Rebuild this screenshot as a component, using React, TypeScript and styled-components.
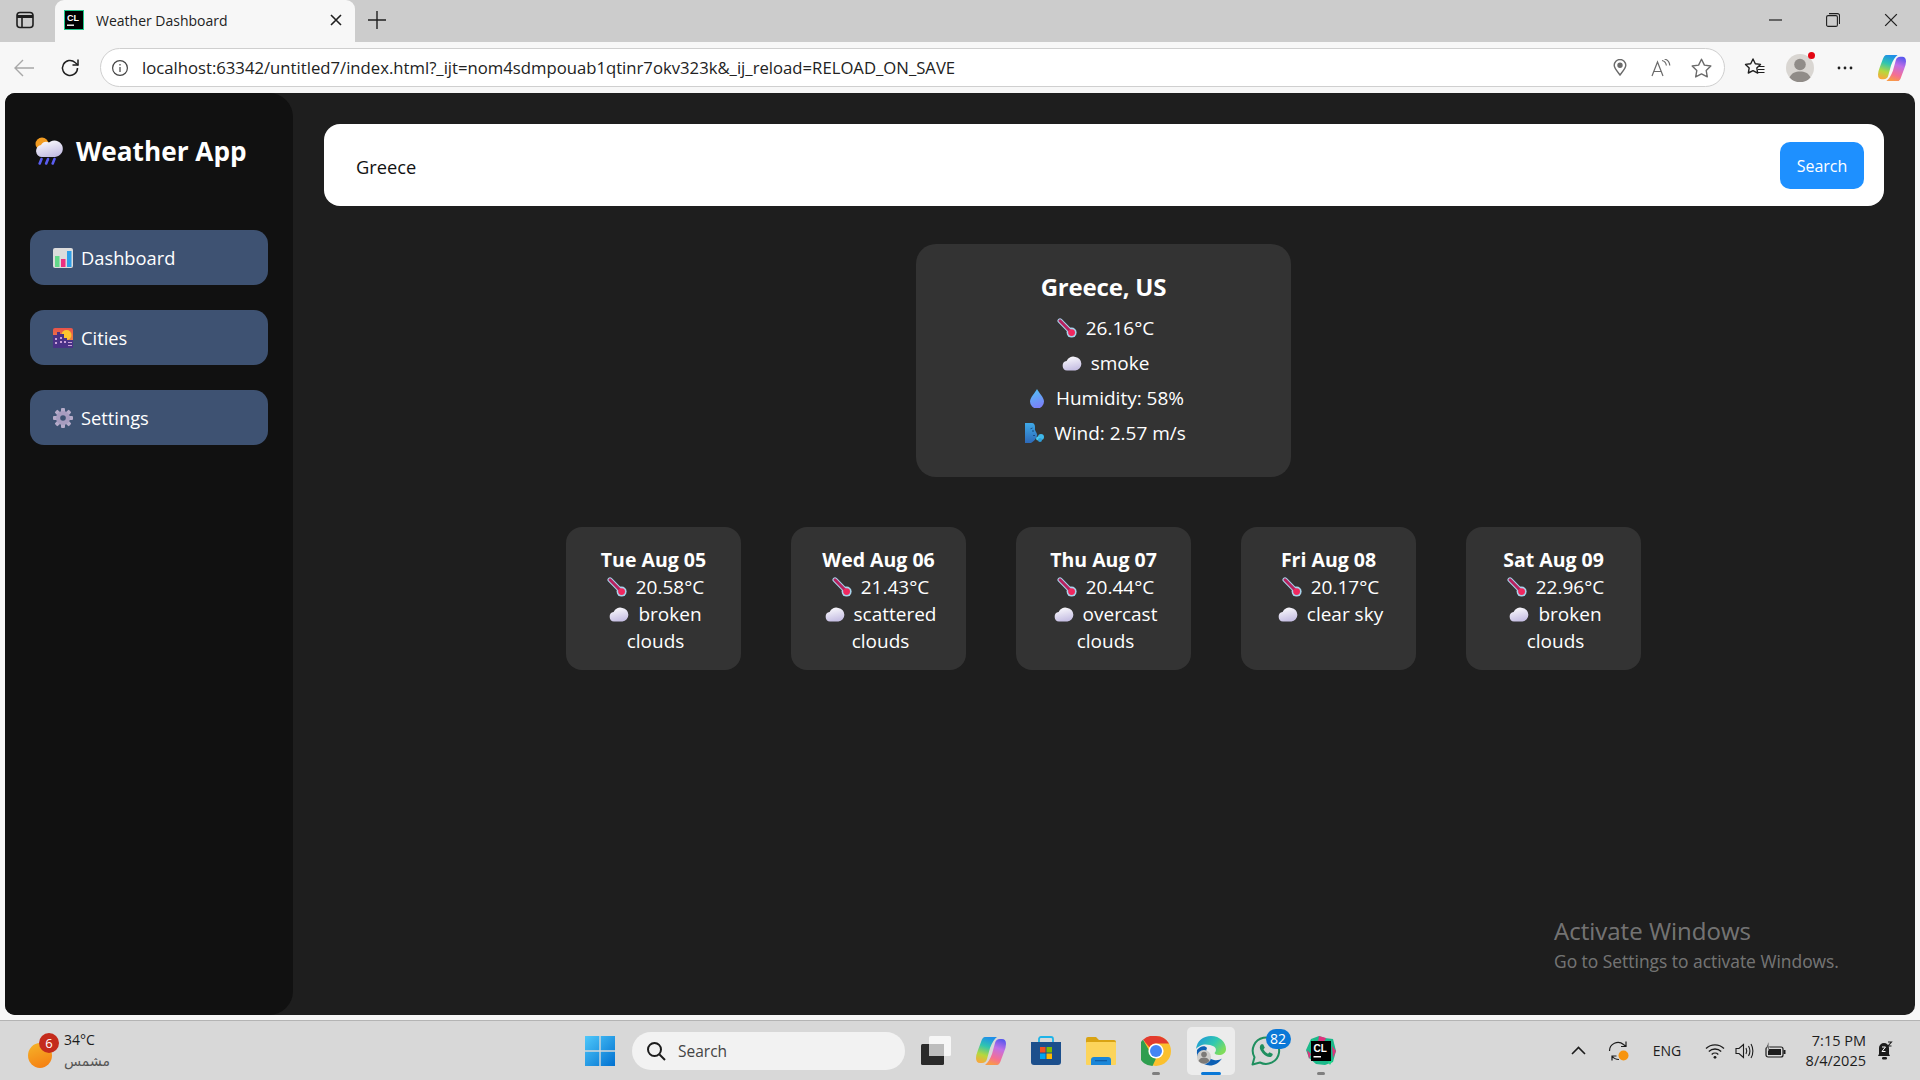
import React from "react";
import styled, { createGlobalStyle } from "styled-components";

const Global = createGlobalStyle`
  html, body { margin: 0; padding: 0; background: #f7f7f7; overflow: hidden; }
  * { box-sizing: border-box; }
  #root { font-family: "Open Sans", "Noto Sans", "DejaVu Sans", sans-serif; }
  svg { display: block; }
`;

const Screen = styled.div`
  width: 1920px;
  height: 1080px;
  display: flex;
  flex-direction: column;
  position: relative;
  background: #f7f7f7;
`;

/* ---------- browser chrome ---------- */
const TabStrip = styled.div`
  height: 42px;
  background: #cccccc;
  display: flex;
  align-items: stretch;
  color: #1a1a1a;
`;
const SideToggle = styled.div`
  width: 55px;
  display: flex;
  align-items: center;
  justify-content: center;
  padding: 0 6px 2px 0;
`;
const Tab = styled.div`
  width: 300px;
  background: #f7f7f7;
  border-radius: 9px 9px 0 0;
  display: flex;
  align-items: center;
  padding: 0 13px 2px 9px;
`;
const TabTitle = styled.span`
  font-size: 14px;
  margin-left: 12px;
  flex: 1;
  color: #222;
  white-space: nowrap;
  font-family: "Open Sans", sans-serif;
`;
const NewTab = styled.div`
  width: 44px;
  display: flex;
  align-items: center;
  justify-content: center;
  padding-bottom: 2px;
`;
const WindowControls = styled.div`
  margin-left: auto;
  display: flex;
`;
const WindowButton = styled.div`
  width: 58px;
  display: flex;
  align-items: center;
  justify-content: center;
  padding-bottom: 2px;
`;
const Toolbar = styled.div`
  height: 51px;
  background: #f7f7f7;
  display: flex;
  align-items: center;
`;
const NavGlyph = styled.div<{ $w?: number }>`
  width: ${(p) => p.$w ?? 45}px;
  height: 40px;
  display: flex;
  align-items: center;
  justify-content: center;
  position: relative;
`;
const AddressBar = styled.div`
  width: 1625px;
  height: 39px;
  margin-left: 8px;
  background: #fff;
  border: 1.5px solid #cfcfcf;
  border-radius: 20px;
  display: flex;
  align-items: center;
  padding: 0 2px 0 10px;
`;
const Url = styled.span`
  font-size: 16.7px;
  margin-left: 13px;
  color: #222;
  flex: 1;
  white-space: nowrap;
`;
const ToolbarEnd = styled.div`
  display: flex;
  margin-left: 7px;
`;
const Dot = styled.span`
  position: absolute;
  top: 4px;
  right: 7px;
  width: 7px;
  height: 7px;
  border-radius: 50%;
  background: #e30613;
`;

/* ---------- page ---------- */
const Page = styled.div`
  height: 922px;
  margin: 0 5px 5px;
  border-radius: 10px;
  background: #1e1e1e;
  display: flex;
  overflow: hidden;
  color: #fff;
`;
const Sidebar = styled.aside`
  width: 288px;
  background: #111111;
  border-radius: 0 24px 24px 0;
  padding: 0 25px;
  flex-shrink: 0;
`;
const Brand = styled.h1`
  margin: 0;
  height: 137px;
  padding: 41px 0 0 5px;
  display: flex;
  align-items: flex-start;
  gap: 13px;
  font-size: 26.2px;
  line-height: 34px;
  font-weight: 700;
`;
const Menu = styled.nav`
  display: flex;
  flex-direction: column;
  gap: 25px;
`;
const MenuItem = styled.div`
  height: 55px;
  background: #3e5272;
  border-radius: 14px;
  display: flex;
  align-items: center;
  padding-left: 23px;
  gap: 8px;
  font-size: 18.3px;
`;
const Main = styled.main`
  flex: 1;
  padding: 31px 31px 0;
  display: flex;
  flex-direction: column;
  align-items: center;
`;
const SearchBox = styled.div`
  width: 100%;
  height: 82px;
  background: #fff;
  border-radius: 16px;
  display: flex;
  align-items: center;
  padding: 0 20px 0 31px;
`;
const SearchInput = styled.input`
  flex: 1;
  border: 0;
  outline: 0;
  padding: 3px 1px 0;
  font-family: inherit;
  font-size: 18.3px;
  color: #111;
  background: transparent;
`;
const SearchButton = styled.button`
  width: 84px;
  height: 47px;
  border: 0;
  border-radius: 10px;
  padding-top: 2px;
  background: #1e90ff;
  color: #fff;
  font-family: inherit;
  font-size: 16px;
`;
const CurrentCard = styled.section`
  width: 375px;
  height: 233px;
  margin: 38px 1px 0 0;
  background: #333333;
  border-radius: 20px;
  padding: 26px 20px 0;
  text-align: center;
`;
const CurrentTitle = styled.h2`
  margin: 0 0 11.5px;
  font-size: 24px;
  line-height: 33px;
  font-weight: 700;
  letter-spacing: -0.2px;
`;
const CurrentRow = styled.div`
  font-size: 19px;
  line-height: 27px;
  margin-bottom: 8px;
  padding-left: 4px;
`;
const ForecastRow = styled.div`
  margin: 50px 1px 0 0;
  display: flex;
  gap: 50px;
`;
const ForecastCard = styled.article`
  width: 175px;
  height: 143px;
  background: #333333;
  border-radius: 16px;
  padding: 19px 18px 0;
  text-align: center;
  font-size: 19px;
  line-height: 27px;
`;
const ForecastDate = styled.div`
  font-weight: 700;
  font-size: 19.5px;
  margin-bottom: 1px;
`;
const ForecastLine = styled.div`
  padding-left: 4px;
`;
const EmojiBox = styled.span`
  display: inline-block;
  width: 20px;
  height: 20px;
  margin-right: 9px;
  vertical-align: -3px;
`;
const MenuEmoji = styled.span`
  width: 20px;
  height: 20px;
  flex-shrink: 0;
`;
const BrandEmoji = styled.span`
  width: 28px;
  height: 28px;
  margin-top: 3px;
  flex-shrink: 0;
`;
const Watermark = styled.div`
  position: absolute;
  left: 1554px;
  top: 915px;
  color: rgba(255, 255, 255, 0.4);
`;
const WatermarkTitle = styled.div`
  font-size: 24px;
  line-height: 32px;
`;
const WatermarkText = styled.div`
  font-size: 17.4px;
  line-height: 28px;
`;

/* ---------- taskbar ---------- */
const Taskbar = styled.footer`
  height: 60px;
  background: #d8d8d8;
  border-top: 1.5px solid #b4b4b4;
  display: flex;
  align-items: center;
  color: #1c1c1c;
`;
const WeatherWidget = styled.div`
  width: 570px;
  height: 100%;
  padding-left: 28px;
  display: flex;
  align-items: center;
  gap: 12px;
`;
const SunBadge = styled.div`
  width: 24px;
  height: 25px;
  margin-top: 9px;
  position: relative;
  border-radius: 50%;
  background: linear-gradient(160deg, #f5b52a, #f57a10);
`;
const Badge = styled.span<{ $bg: string; $w: number }>`
  position: absolute;
  display: flex;
  align-items: center;
  justify-content: center;
  background: ${(p) => p.$bg};
  color: #fff;
  border-radius: 10px;
  width: ${(p) => p.$w}px;
  height: 20px;
  font-size: 13px;
`;
const SunCount = styled(Badge)`
  top: -10px;
  right: -7px;
`;
const WeatherText = styled.div`
  display: flex;
  flex-direction: column;
`;
const WeatherTemp = styled.span`
  font-size: 14px;
  line-height: 20px;
`;
const WeatherNote = styled.span`
  font-size: 14px;
  line-height: 22px;
  color: #555;
  font-family: "DejaVu Sans", sans-serif;
`;
const StartSlot = styled.div`
  width: 60px;
  display: flex;
  justify-content: center;
`;
const TaskSearch = styled.div`
  width: 273px;
  height: 38px;
  margin: 0 3.5px 0 2px;
  background: #f2f2f2;
  border-radius: 19px;
  display: flex;
  align-items: center;
  padding-left: 14px;
  gap: 12px;
  font-size: 15.5px;
  color: #444;
`;
const TaskIcon = styled.div`
  width: 55px;
  height: 48px;
  display: flex;
  align-items: center;
  justify-content: center;
  position: relative;
`;
const ActiveTile = styled.div`
  position: absolute;
  left: 3.5px;
  top: 0;
  width: 48px;
  height: 48px;
  border-radius: 5px;
  background: #ececec;
`;
const RunMark = styled.span<{ $active?: boolean }>`
  position: absolute;
  bottom: 0;
  left: 50%;
  transform: translateX(-50%);
  height: 3px;
  border-radius: 2px;
  width: ${(p) => (p.$active ? 20 : 8)}px;
  background: ${(p) => (p.$active ? "#0a78d7" : "#7f7f7f")};
`;
const IconLayer = styled.div`
  position: relative;
`;
const ChatCount = styled(Badge)`
  top: 2px;
  right: 3px;
  font-size: 14px;
`;
const Tray = styled.div`
  margin-left: auto;
  display: flex;
  align-items: center;
  padding-right: 27px;
`;
const TrayGlyph = styled.div<{ $w: number }>`
  width: ${(p) => p.$w}px;
  display: flex;
  justify-content: center;
  position: relative;
`;
const Lang = styled.span`
  font-size: 14px;
  width: 50px;
  margin-right: 8px;
  text-align: center;
`;
const Clock = styled.div`
  width: 76px;
  text-align: right;
  white-space: nowrap;
  font-size: 14.5px;
  line-height: 20px;
`;
const Bell = styled.div`
  margin-left: 10px;
`;

/* ---------- drawings ---------- */
const Thermo = () => (
  <svg viewBox="0 0 20 20" width="20" height="20">
    <line x1="3" y1="2.8" x2="13" y2="13" stroke="#a8d4ec" strokeWidth="5" strokeLinecap="round" />
    <circle cx="14.6" cy="14.6" r="5" fill="#a8d4ec" />
    <line x1="3" y1="2.8" x2="13" y2="13" stroke="#b6225f" strokeWidth="3" strokeLinecap="round" />
    <circle cx="14.6" cy="14.6" r="3.4" fill="#f0285f" />
  </svg>
);
const Cloud = () => (
  <svg viewBox="0 0 20 20" width="20" height="20">
    <defs>
      <linearGradient id="cl" x1="0" y1="0" x2="0.3" y2="1">
        <stop offset="0" stopColor="#ffffff" />
        <stop offset="1" stopColor="#c8c1e4" />
      </linearGradient>
    </defs>
    <path d="M5 17.5a4.8 4.8 0 0 1-.4-9.5A7 7 0 0 1 13.4 4a6.8 6.8 0 0 1 0 13.5z" fill="url(#cl)" />
  </svg>
);
const Drop = () => (
  <svg viewBox="0 0 20 20" width="20" height="20">
    <defs>
      <linearGradient id="dr" x1="0" y1="0" x2="0.3" y2="1">
        <stop offset="0" stopColor="#4fc6f5" />
        <stop offset="1" stopColor="#7a82f8" />
      </linearGradient>
    </defs>
    <path d="M10 1C8 5 3 9.5 3 13.6a7 7 0 0 0 14 0C17 9.5 12 5 10 1z" fill="url(#dr)" />
  </svg>
);
const WindFace = () => (
  <svg viewBox="0 0 20 20" width="20" height="20">
    <defs>
      <linearGradient id="wf" x1="0" y1="0" x2="0" y2="1">
        <stop offset="0" stopColor="#3fa9e8" />
        <stop offset="1" stopColor="#2d69b8" />
      </linearGradient>
    </defs>
    <path d="M0 0h7c2 0 3 2 3 4v3c1 2 3 5 2 6-1 3-3 5-6 7H0z" fill="url(#wf)" />
    <circle cx="8" cy="8" r="0.8" fill="#123f73" />
    <path d="M5.5 5.8l2-.8M8 12.5h2" stroke="#123f73" strokeWidth="0.8" />
    <circle cx="16" cy="14" r="3" fill="#3fb8ea" />
    <circle cx="13" cy="15.5" r="2" fill="#48c6ef" />
    <circle cx="15" cy="17" r="2" fill="#2f9fdb" />
  </svg>
);
const BrandIcon = () => (
  <svg viewBox="0 0 28 28" width="28" height="28">
    <defs>
      <linearGradient id="bc" x1="0.1" y1="0" x2="0.5" y2="1">
        <stop offset="0" stopColor="#ffffff" />
        <stop offset="1" stopColor="#c5bfe4" />
      </linearGradient>
    </defs>
    <circle cx="7" cy="7" r="6.500" fill="#f29c22" />
    <path d="M7 20a6 6 0 0 1-1-11.900 6.500 6.500 0 0 1 8-2.600A8.300 8.300 0 1 1 20 20z" fill="url(#bc)" />
    <path d="M6.500 22l-1.800 4.500M13 22l-1.800 4.500M19.500 22l-1.800 4.500" stroke="#5a5df0" strokeWidth="2.600" strokeLinecap="round" />
  </svg>
);
const ChartIcon = () => (
  <svg viewBox="0 0 20 20" width="20" height="20">
    <rect x="0" y="0" width="20" height="20" rx="2" fill="#dcdcdc" />
    <rect x="2" y="8" width="4.5" height="11" fill="#63d88a" />
    <rect x="8" y="11" width="4.5" height="8" fill="#ee2f80" />
    <rect x="14" y="3" width="4.5" height="16" fill="#2f9fe8" />
  </svg>
);
const CityIcon = () => (
  <svg viewBox="0 0 20 20" width="20" height="20">
    <defs>
      <linearGradient id="sk" x1="0" y1="0" x2="0" y2="1">
        <stop offset="0" stopColor="#e8534a" />
        <stop offset="1" stopColor="#f2a03c" />
      </linearGradient>
    </defs>
    <rect width="20" height="20" rx="2" fill="url(#sk)" />
    <circle cx="13.5" cy="7" r="5" fill="#fdc52e" />
    <path d="M0 7h4v-3h3v2h4v4h3v2h6v8H0z" fill="#4a3286" />
    <path d="M2 10h2v2H2zM7 9h2v2H7zM7 13h2v2H7zM11 13h2v2h-2zM15 14h4v1h-4zM15 17h4v1h-4zM2 14h2v2H2z" fill="#c9a0d8" />
  </svg>
);
const GearIcon = () => (
  <svg viewBox="0 0 20 20" width="20" height="20">
    {[0, 45, 90, 135, 180, 225, 270, 315].map((a) => (
      <rect key={a} x="8" y="0" width="4" height="5" rx="1" fill="#b5abc9" transform={`rotate(${a} 10 10)`} />
    ))}
    <circle cx="10" cy="10" r="7" fill="#a79cbf" />
    <circle cx="10" cy="10" r="2.8" fill="#3e5272" />
  </svg>
);

const FaviconCL = ({ size }: { size: number }) => (
  <svg viewBox="0 0 20 20" width={size} height={size}>
    <rect x="0.5" y="0.5" width="19" height="19" fill="#000" stroke="#1fc98a" strokeWidth="1" />
    <text x="3" y="11" fontSize="9" fontWeight="700" fill="#fff" fontFamily="Liberation Sans">CL</text>
    <rect x="3" y="14.5" width="7" height="1.4" fill="#fff" />
  </svg>
);

const Ink = "#1f1f1f";
const Gray = "#6a6a6a";

const SidePanelGlyph = () => (
  <svg width="18" height="18" viewBox="0 0 18 18" fill="none" stroke={Ink} strokeWidth="1.6">
    <rect x="1" y="1.5" width="16" height="15" rx="3" />
    <path d="M1 5.5h16" strokeWidth="3" />
    <path d="M6 5v11" />
  </svg>
);
const CloseGlyph = ({ s = 12, w = 1.6 }: { s?: number; w?: number }) => (
  <svg width={s} height={s} viewBox="0 0 12 12" stroke={Ink} strokeWidth={w}>
    <path d="M1 1l10 10M11 1L1 11" />
  </svg>
);
const PlusGlyph = () => (
  <svg width="18" height="18" viewBox="0 0 18 18" stroke={Ink} strokeWidth="1.4">
    <path d="M9 0v18M0 9h18" />
  </svg>
);
const MinGlyph = () => (
  <svg width="13" height="2" viewBox="0 0 13 2" stroke={Ink}><path d="M0 1h13" strokeWidth="1.2" /></svg>
);
const RestoreGlyph = () => (
  <svg width="14" height="14" viewBox="0 0 14 14" fill="none" stroke={Ink} strokeWidth="1.1">
    <rect x="0.6" y="2.6" width="10.8" height="10.8" rx="1.5" />
    <path d="M3 .6h8.5a2 2 0 0 1 2 2V11" />
  </svg>
);
const BackGlyph = () => (
  <svg width="20" height="18" viewBox="0 0 20 18" fill="none" stroke="#a8a8a8" strokeWidth="1.4">
    <path d="M20 9H1M9 1L1 9l8 8" />
  </svg>
);
const ReloadGlyph = () => (
  <svg width="20" height="20" viewBox="0 0 20 20" fill="none" stroke={Ink} strokeWidth="1.5">
    <path d="M17.5 10a7.5 7.5 0 1 1-2.4-5.5L18 7" />
    <path d="M18 1.5V7h-5.5" />
  </svg>
);
const InfoGlyph = () => (
  <svg width="18" height="18" viewBox="0 0 18 18" fill="none" stroke="#444" strokeWidth="1.2">
    <circle cx="9" cy="9" r="7.4" />
    <path d="M9 8v5M9 5v1.5" />
  </svg>
);
const PinGlyph = () => (
  <svg width="14" height="17" viewBox="0 0 14 17" fill="none" stroke={Gray} strokeWidth="1.4">
    <path d="M7 16C3.5 11.5 1.2 9 1.2 6.3a5.8 5.8 0 0 1 11.6 0C12.8 9 10.5 11.5 7 16z" />
    <circle cx="7" cy="6.2" r="2" fill={Gray} />
  </svg>
);
const AloudGlyph = () => (
  <svg width="20" height="18" viewBox="0 0 20 18" fill="none" stroke={Gray} strokeWidth="1.2">
    <path d="M1 17L6.5 3 12 17M3 12.5h7" />
    <path d="M11 1.5c2.5.6 4 2.5 4.4 5" />
    <path d="M13.5 0c3 .8 5 3.3 5.3 6.5" />
  </svg>
);
const StarGlyph = () => (
  <svg width="21" height="20" viewBox="0 0 21 20" fill="none" stroke={Gray} strokeWidth="1.4" strokeLinejoin="round">
    <path d="M10.5 1.2l2.9 5.9 6.4.9-4.6 4.5 1.1 6.4-5.8-3-5.8 3 1.1-6.4L1.2 8l6.4-.9z" />
  </svg>
);
const FavGlyph = () => (
  <svg width="21" height="19" viewBox="0 0 21 19" fill="none" stroke={Ink} strokeWidth="1.4" strokeLinejoin="round">
    <path d="M9 1l2.3 4.7 5.2.7-3.700 3.600.900 5.100L9 12.700 4.300 15l.900-5.100L1.500 6.400l5.200-.7z" />
    <path d="M14 8.500h6.500M14 11.500h6.500M13.500 14.500h7" strokeWidth="1.2" />
  </svg>
);
const AvatarGlyph = () => (
  <svg width="28" height="28" viewBox="0 0 28 28">
    <circle cx="14" cy="14" r="14" fill="#d9d6d2" />
    <circle cx="14" cy="10.500" r="5.800" fill="#908c88" />
    <path d="M3.500 23.500c2-4.500 6-6 10.500-6s8.500 1.500 10.500 6A14 14 0 0 1 3.500 23.500z" fill="#908c88" />
  </svg>
);
const DotsGlyph = () => (
  <svg width="16" height="4" viewBox="0 0 16 4" fill={Ink}>
    <circle cx="2" cy="2" r="1.400" /><circle cx="8" cy="2" r="1.400" /><circle cx="14" cy="2" r="1.400" />
  </svg>
);
const CopilotGlyph = ({ size }: { size: number }) => (
  <svg width={size} height={size} viewBox="0 0 30 30">
    <defs>
      <linearGradient id="cpA" x1="0.55" y1="0" x2="0.3" y2="1">
        <stop offset="0" stopColor="#1f8fe8" />
        <stop offset="0.35" stopColor="#2fc5b0" />
        <stop offset="0.7" stopColor="#b7d83c" />
        <stop offset="1" stopColor="#f7a93c" />
      </linearGradient>
      <linearGradient id="cpB" x1="0.7" y1="0" x2="0.4" y2="1">
        <stop offset="0" stopColor="#5a58ee" />
        <stop offset="0.35" stopColor="#c06fe6" />
        <stop offset="0.75" stopColor="#f56f92" />
        <stop offset="1" stopColor="#f89a48" />
      </linearGradient>
    </defs>
    <path d="M9 1H21Q17 4 14 12L11 23Q10 27 6 27H4Q0 27 0 22Q0 19 2 14L5 6Q6.500 1 9 1z" fill="url(#cpA)" />
    <path d="M21 29H9Q13 26 16 18L19 7Q20 3 24 3H26Q30 3 30 8Q30 11 28 16L25 24Q23.500 29 21 29z" fill="url(#cpB)" />
  </svg>
);
const StartLogo = () => (
  <svg width="30" height="30" viewBox="0 0 30 30">
    <defs>
      <linearGradient id="st" x1="0" y1="0" x2="1" y2="1">
        <stop offset="0" stopColor="#4fc8fa" />
        <stop offset="1" stopColor="#0070d0" />
      </linearGradient>
    </defs>
    <path d="M0 0h14.300v14.300H0zM15.700 0H30v14.300H15.700zM0 15.700h14.300V30H0zM15.700 15.700H30V30H15.700z" fill="url(#st)" />
  </svg>
);
const SearchGlyph = () => (
  <svg width="20" height="20" viewBox="0 0 20 20" fill="none" stroke="#1c1c1c" strokeWidth="2">
    <circle cx="8.500" cy="8.500" r="6.500" />
    <path d="M13.500 13.500L19 19" />
  </svg>
);
const TaskViewGlyph = () => (
  <svg width="30" height="30" viewBox="0 0 30 30">
    <rect x="0" y="8" width="23" height="21" rx="1.500" fill="#2a2a2a" />
    <rect x="8" y="0" width="22" height="20" rx="1.500" fill="#f6f6f6" />
    <rect x="8" y="8" width="15" height="12" fill="#bdbdbd" />
  </svg>
);
const StoreGlyph = () => (
  <svg width="30" height="30" viewBox="0 0 30 30">
    <path d="M8 7V3a2 2 0 0 1 2-2h10a2 2 0 0 1 2 2v4" fill="none" stroke="#1fb4e8" strokeWidth="1.800" />
    <path d="M0 6h30v20a3 3 0 0 1-3 3H3a3 3 0 0 1-3-3z" fill="#1c4f8c" />
    <rect x="9" y="11" width="5.500" height="5.500" fill="#f25022" />
    <rect x="15.500" y="11" width="5.500" height="5.500" fill="#7fba00" />
    <rect x="9" y="17.500" width="5.500" height="5.500" fill="#00a4ef" />
    <rect x="15.500" y="17.500" width="5.500" height="5.500" fill="#ffb900" />
  </svg>
);
const FilesGlyph = () => (
  <svg width="30" height="28" viewBox="0 0 30 28">
    <path d="M0 2a2 2 0 0 1 2-2h8l3 3h15a2 2 0 0 1 2 2v5H0z" fill="#d9a313" />
    <rect x="0" y="5" width="30" height="23" rx="1" fill="#fcd45b" />
    <path d="M5 28v-5a3 3 0 0 1 3-3h14a3 3 0 0 1 3 3v5z" fill="#1a86d8" />
    <rect x="9" y="23" width="12" height="1.300" fill="#0f5fa8" />
  </svg>
);
const ChromeGlyph = () => (
  <svg width="30" height="30" viewBox="0 0 30 30">
    <circle cx="15" cy="15" r="15" fill="#fbc02d" />
    <path d="M15 0a15 15 0 0 1 13 7.500H15a7.500 7.500 0 0 0-6.500 3.750L2 3.800A15 15 0 0 1 15 0z" fill="#e33b2e" />
    <path d="M2 3.800l6.500 11.200A7.500 7.500 0 0 0 15 22.500L11.500 30A15 15 0 0 1 2 3.800z" fill="#2e9e4f" />
    <circle cx="15" cy="15" r="7.600" fill="#fff" />
    <circle cx="15" cy="15" r="6" fill="#4385f4" />
  </svg>
);
const EdgeGlyph = () => (
  <svg width="30" height="30" viewBox="0 0 30 30">
    <defs>
      <linearGradient id="edA" x1="0" y1="0" x2="1" y2="0.6">
        <stop offset="0" stopColor="#1b8fe0" />
        <stop offset="0.6" stopColor="#31c9b0" />
        <stop offset="1" stopColor="#7fdc5c" />
      </linearGradient>
    </defs>
    <path d="M0 13C1 5 7 0 15 0c9 0 15 6.500 15 13 0 4-3.500 6-7 6-2.500 0-4-1-4.500-2 2-1.500 2-5-.5-6.500C14 8.500 8 7.500 4 10c-2 1.200-3.200 2-4 3z" fill="url(#edA)" />
    <path d="M1 14c3-4 8-5 10-2-2 4 0 11 7 12 3.500.6 6-.3 8-1.500-3 4.500-7.500 7-12 7C5 29 0 22 1 14z" fill="#0c5fb4" />
    <circle cx="8" cy="21" r="7" fill="#cfcdca" />
    <circle cx="8" cy="18.500" r="2.800" fill="#7d7a77" />
    <path d="M2.500 25c1-2.500 3-3.500 5.500-3.500s4.500 1 5.500 3.500a7 7 0 0 1-11 0z" fill="#7d7a77" />
  </svg>
);
const WhatsGlyph = () => (
  <svg width="30" height="30" viewBox="0 0 30 30" fill="none">
    <path d="M1.500 28.500l2-7.200A13.200 13.200 0 1 1 9 26.500z" stroke="#1f8f5f" strokeWidth="2" strokeLinejoin="round" />
    <path d="M10 8.500c-2 2-1.500 5 1.500 8.500s7 5 9 3.500c1-.8 1.500-2 1-2.700l-3-1.500-1.500 1.500c-1.500-.5-4-3-4.500-4.500l1.300-1.500-1.500-3.300c-.5-.5-1.500-.5-2.300 0z" fill="#1f8f5f" />
  </svg>
);
const ClionGlyph = () => (
  <svg width="30" height="30" viewBox="0 0 30 30">
    <path d="M5 3l8-3 6 2 8 1 3 12-3 11-8 3-9-1-7-6-3-8z" fill="#1bb98a" />
    <path d="M13 0l7 2-2 4h-6zM26 10l4 5-3 7zM1 14l4 4-2 5z" fill="#e0317e" />
    <path d="M22 26l5-2-3 5zM4 8l3-5 2 5z" fill="#21d789" />
    <rect x="5" y="5" width="20" height="20" fill="#000" />
    <text x="7.500" y="15.500" fontSize="10" fontWeight="700" fill="#fff" fontFamily="Liberation Sans">CL</text>
    <rect x="7.500" y="20" width="7.500" height="1.500" fill="#fff" />
  </svg>
);
const ChevronGlyph = () => (
  <svg width="15" height="9" viewBox="0 0 15 9" fill="none" stroke="#1c1c1c" strokeWidth="1.600">
    <path d="M1 8l6.500-6.500L14 8" />
  </svg>
);
const SyncGlyph = () => (
  <svg width="22" height="22" viewBox="0 0 22 22" fill="none" stroke="#1c1c1c" strokeWidth="1.200">
    <path d="M1.500 11a8.500 8.500 0 0 1 14-6.500L18 6.500M18 1.500v5h-5" />
    <path d="M11 19.500a8.500 8.500 0 0 1-7-3.500M4 20.500v-4.500h4.500" />
    <circle cx="15.500" cy="15.500" r="5" fill="#f7940d" stroke="none" />
  </svg>
);
const WifiGlyph = () => (
  <svg width="20" height="16" viewBox="0 0 20 16" fill="none" stroke="#1c1c1c" strokeWidth="1.300">
    <path d="M1 5.500a13 13 0 0 1 18 0M3.800 8.500a9 9 0 0 1 12.400 0M6.700 11.500a4.800 4.800 0 0 1 6.600 0" />
    <circle cx="10" cy="14.300" r="1.400" fill="#1c1c1c" stroke="none" />
  </svg>
);
const VolumeGlyph = () => (
  <svg width="20" height="16" viewBox="0 0 20 16" fill="none" stroke="#1c1c1c" strokeWidth="1.100">
    <path d="M1 5.500h3L8.500 1.500v13L4 10.500H1z" />
    <path d="M11 5c1 2 1 4 0 6M13.500 3c1.700 3 1.700 7 0 10M16 1c2.500 4 2.500 10 0 14" />
  </svg>
);
const BatteryGlyph = () => (
  <svg width="21" height="17" viewBox="0 0 21 17" fill="none" stroke="#1c1c1c" strokeWidth="1.200">
    <rect x="1" y="5" width="17" height="10" rx="2" />
    <rect x="3" y="7" width="13" height="6" fill="#1c1c1c" stroke="none" />
    <rect x="18.500" y="8" width="2" height="4" fill="#1c1c1c" stroke="none" />
    <path d="M3.500 0L1.500 5h3L3 9" fill="#1c1c1c" stroke="#d8d8d8" strokeWidth="0.600" />
  </svg>
);
const BellGlyph = () => (
  <svg width="17" height="20" viewBox="0 0 17 20">
    <path d="M2 15l1-2V7a5 5 0 0 1 10 0v6l1 2z" fill="#1c1c1c" />
    <rect x="6" y="16" width="5" height="2.500" rx="1.200" fill="#1c1c1c" />
    <path d="M6 6h3.500L6 10.500h3.500" stroke="#fff" strokeWidth="1" fill="none" />
    <path d="M12 1h3.500L12 5h3.500" stroke="#1c1c1c" strokeWidth="1.100" fill="#d8d8d8" />
  </svg>
);

const forecast = [
  { date: "Tue Aug 05", temp: "20.58°C", sky: "broken clouds" },
  { date: "Wed Aug 06", temp: "21.43°C", sky: "scattered clouds" },
  { date: "Thu Aug 07", temp: "20.44°C", sky: "overcast clouds" },
  { date: "Fri Aug 08", temp: "20.17°C", sky: "clear sky" },
  { date: "Sat Aug 09", temp: "22.96°C", sky: "broken clouds" },
];

export default function App() {
  return (
    <Screen>
      <Global />
      <TabStrip>
        <SideToggle><SidePanelGlyph /></SideToggle>
        <Tab>
          <FaviconCL size={20} />
          <TabTitle>Weather Dashboard</TabTitle>
          <CloseGlyph />
        </Tab>
        <NewTab><PlusGlyph /></NewTab>
        <WindowControls>
          <WindowButton><MinGlyph /></WindowButton>
          <WindowButton><RestoreGlyph /></WindowButton>
          <WindowButton><CloseGlyph s={14} w={1.1} /></WindowButton>
        </WindowControls>
      </TabStrip>
      <Toolbar>
        <NavGlyph $w={48}><BackGlyph /></NavGlyph>
        <NavGlyph $w={44}><ReloadGlyph /></NavGlyph>
        <AddressBar>
          <InfoGlyph />
          <Url>localhost:63342/untitled7/index.html?_ijt=nom4sdmpouab1qtinr7okv323k&amp;_ij_reload=RELOAD_ON_SAVE</Url>
          <NavGlyph $w={41}><PinGlyph /></NavGlyph>
          <NavGlyph $w={41}><AloudGlyph /></NavGlyph>
          <NavGlyph $w={41}><StarGlyph /></NavGlyph>
        </AddressBar>
        <ToolbarEnd>
          <NavGlyph><FavGlyph /></NavGlyph>
          <NavGlyph><AvatarGlyph /><Dot /></NavGlyph>
          <NavGlyph $w={45}><DotsGlyph /></NavGlyph>
          <NavGlyph $w={49}><CopilotGlyph size={28} /></NavGlyph>
        </ToolbarEnd>
      </Toolbar>
      <Page>
        <Sidebar>
          <Brand>
            <BrandEmoji><BrandIcon /></BrandEmoji>
            Weather App
          </Brand>
          <Menu>
            <MenuItem><MenuEmoji><ChartIcon /></MenuEmoji>Dashboard</MenuItem>
            <MenuItem><MenuEmoji><CityIcon /></MenuEmoji>Cities</MenuItem>
            <MenuItem><MenuEmoji><GearIcon /></MenuEmoji>Settings</MenuItem>
          </Menu>
        </Sidebar>
        <Main>
          <SearchBox>
            <SearchInput defaultValue="Greece" readOnly />
            <SearchButton>Search</SearchButton>
          </SearchBox>
          <CurrentCard>
            <CurrentTitle>Greece, US</CurrentTitle>
            <CurrentRow><EmojiBox><Thermo /></EmojiBox>26.16°C</CurrentRow>
            <CurrentRow><EmojiBox><Cloud /></EmojiBox>smoke</CurrentRow>
            <CurrentRow><EmojiBox><Drop /></EmojiBox>Humidity: 58%</CurrentRow>
            <CurrentRow><EmojiBox><WindFace /></EmojiBox>Wind: 2.57 m/s</CurrentRow>
          </CurrentCard>
          <ForecastRow>
            {forecast.map((f) => (
              <ForecastCard key={f.date}>
                <ForecastDate>{f.date}</ForecastDate>
                <ForecastLine><EmojiBox><Thermo /></EmojiBox>{f.temp}</ForecastLine>
                <ForecastLine><EmojiBox><Cloud /></EmojiBox>{f.sky}</ForecastLine>
              </ForecastCard>
            ))}
          </ForecastRow>
        </Main>
      </Page>
      <Watermark>
        <WatermarkTitle>Activate Windows</WatermarkTitle>
        <WatermarkText>Go to Settings to activate Windows.</WatermarkText>
      </Watermark>
      <Taskbar>
        <WeatherWidget>
          <SunBadge><SunCount $bg="#c42b1c" $w={20}>6</SunCount></SunBadge>
          <WeatherText>
            <WeatherTemp>34°C</WeatherTemp>
            <WeatherNote>مشمس</WeatherNote>
          </WeatherText>
        </WeatherWidget>
        <StartSlot><StartLogo /></StartSlot>
        <TaskSearch><SearchGlyph />Search</TaskSearch>
        <TaskIcon><TaskViewGlyph /></TaskIcon>
        <TaskIcon><CopilotGlyph size={30} /></TaskIcon>
        <TaskIcon><StoreGlyph /></TaskIcon>
        <TaskIcon><FilesGlyph /></TaskIcon>
        <TaskIcon><ChromeGlyph /><RunMark /></TaskIcon>
        <TaskIcon>
          <ActiveTile />
          <IconLayer><EdgeGlyph /></IconLayer>
          <RunMark $active />
        </TaskIcon>
        <TaskIcon><WhatsGlyph /><ChatCount $bg="#0a78d7" $w={25}>82</ChatCount></TaskIcon>
        <TaskIcon><ClionGlyph /><RunMark /></TaskIcon>
        <Tray>
          <TrayGlyph $w={35}><ChevronGlyph /></TrayGlyph>
          <TrayGlyph $w={46}><SyncGlyph /></TrayGlyph>
          <Lang>ENG</Lang>
          <TrayGlyph $w={30}><WifiGlyph /></TrayGlyph>
          <TrayGlyph $w={30}><VolumeGlyph /></TrayGlyph>
          <TrayGlyph $w={30}><BatteryGlyph /></TrayGlyph>
          <Clock>7:15 PM<br />8/4/2025</Clock>
          <Bell><BellGlyph /></Bell>
        </Tray>
      </Taskbar>
    </Screen>
  );
}
